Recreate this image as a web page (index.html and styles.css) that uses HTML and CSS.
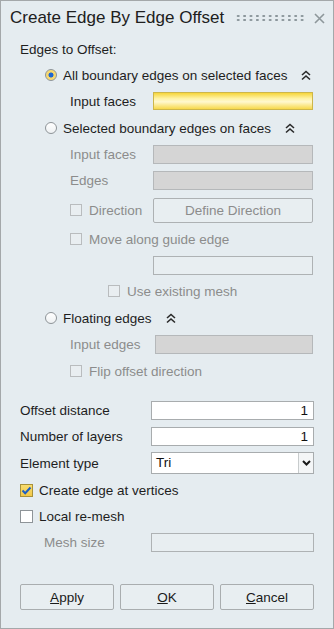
FILE: index.html
```html
<!DOCTYPE html>
<html lang="en">
<head>
    <meta charset="UTF-8">
    <meta name="viewport" content="width=device-width, initial-scale=1.0">
    <title>Create Edge By Edge Offset</title>
    <link rel="stylesheet" href="styles.css">
</head>
<body>
    <div class="dialog">
        <div class="titlebar">
            <span class="title">Create Edge By Edge Offset</span>
            <span class="grip"></span>
            <svg class="close" width="11" height="11" viewBox="0 0 11 11">
                <path d="M1 1L10 10M10 1L1 10" stroke="#8e979b" stroke-width="1.6" fill="none"/>
            </svg>
        </div>

        <div class="content">
            <div class="row group-label">Edges to Offset:</div>

            <div class="row opt">
                <span class="radio checked"></span>
                <span>All boundary edges on selected faces</span>
                <svg class="chev" width="10" height="11" viewBox="0 0 10 11">
                    <path d="M1 5L5 1.5L9 5M1 9.5L5 6L9 9.5" stroke="#2a2a2a" stroke-width="1.6" fill="none"/>
                </svg>
            </div>
            <div class="row sub">
                <span class="lbl">Input faces</span>
                <span class="field active"></span>
            </div>

            <div class="row opt">
                <span class="radio"></span>
                <span>Selected boundary edges on faces</span>
                <svg class="chev" width="10" height="11" viewBox="0 0 10 11">
                    <path d="M1 5L5 1.5L9 5M1 9.5L5 6L9 9.5" stroke="#2a2a2a" stroke-width="1.6" fill="none"/>
                </svg>
            </div>
            <div class="row sub off">
                <span class="lbl">Input faces</span>
                <span class="field grey"></span>
            </div>
            <div class="row sub off">
                <span class="lbl">Edges</span>
                <span class="field grey"></span>
            </div>
            <div class="row sub off dir-row">
                <span class="lbl"><span class="check dim"></span>Direction</span>
                <span class="btn dim-btn">Define Direction</span>
            </div>
            <div class="row sub off move-row">
                <span class="check dim"></span>Move along guide edge
            </div>
            <div class="row sub">
                <span class="lbl"></span>
                <span class="field empty"></span>
            </div>
            <div class="row off use-row">
                <span class="check dim"></span>Use existing mesh
            </div>

            <div class="row opt">
                <span class="radio"></span>
                <span>Floating edges</span>
                <svg class="chev" width="10" height="11" viewBox="0 0 10 11">
                    <path d="M1 5L5 1.5L9 5M1 9.5L5 6L9 9.5" stroke="#2a2a2a" stroke-width="1.6" fill="none"/>
                </svg>
            </div>
            <div class="row sub off">
                <span class="lbl wide">Input edges</span>
                <span class="field grey narrow"></span>
            </div>
            <div class="row sub off flip-row">
                <span class="check dim"></span>Flip offset direction
            </div>

            <div class="lower">
                <div class="row">
                    <span class="lbl2">Offset distance</span>
                    <span class="field num">1</span>
                </div>
                <div class="row">
                    <span class="lbl2">Number of layers</span>
                    <span class="field num">1</span>
                </div>
                <div class="row tall">
                    <span class="lbl2">Element type</span>
                    <span class="select">
                        <span class="select-text">Tri</span>
                        <span class="select-arrow">
                            <svg width="9" height="6" viewBox="0 0 9 6">
                                <path d="M1 1L4.5 4.5L8 1" stroke="#1a1a1a" stroke-width="2" fill="none"/>
                            </svg>
                        </span>
                    </span>
                </div>
                <div class="row">
                    <span class="check on">
                        <svg width="11" height="9" viewBox="0 0 11 9">
                            <path d="M1.5 4.5L4.2 7.2L9.5 1.5" stroke="#1d5fc4" stroke-width="2" fill="none"/>
                        </svg>
                    </span>Create edge at vertices
                </div>
                <div class="row">
                    <span class="check"></span>Local re-mesh
                </div>
                <div class="row off mesh-row">
                    <span class="lbl3">Mesh size</span>
                    <span class="field empty"></span>
                </div>
            </div>
        </div>

        <div class="buttons">
            <span class="btn"><u>A</u>pply</span>
            <span class="btn"><u>O</u>K</span>
            <span class="btn"><u>C</u>ancel</span>
        </div>
    </div>
</body>
</html>
```

FILE: styles.css
```css
body {
    margin: 0;
    font-family: "Liberation Sans", Arial, sans-serif;
    font-size: 13.5px;
    color: #1e1e1e;
}

.dialog {
    width: 334px;
    height: 629px;
    box-sizing: border-box;
    border: 1px solid #a4a8aa;
    background-color: #e5ecf0;
}

.titlebar {
    display: flex;
    align-items: center;
    height: 34px;
    padding-left: 9px;
}

.title {
    font-size: 17px;
    color: #202020;
}

.grip {
    width: 70px;
    height: 8px;
    margin-left: 11px;
    background-image: radial-gradient(circle, #8a959a 1px, transparent 1.3px);
    background-size: 6.4px 4px;
}

.close {
    margin-left: 9px;
}

.content {
    padding: 3px 0 0 19px;
}

.row {
    display: flex;
    align-items: center;
    height: 26px;
}

.group-label {
    height: 23px;
}

.opt {
    margin-top: 1px;
    padding-left: 25px;
}

.sub {
    padding-left: 50px;
}

.off {
    color: #8c8c8c;
}

.lbl {
    display: flex;
    align-items: center;
    width: 83px;
}

.lbl.wide {
    width: 85px;
}

.radio {
    width: 12px;
    height: 12px;
    box-sizing: border-box;
    border: 1px solid #8e9498;
    border-radius: 50%;
    background: linear-gradient(#ffffff, #eef1f3);
    margin-right: 6px;
}

.radio.checked {
    background: radial-gradient(circle, #1f67d2 2.2px, #f4d46a 2.8px, #f7dc7a 5px);
}

.chev {
    margin-left: 14px;
}

.field {
    display: block;
    width: 160px;
    height: 19px;
    box-sizing: border-box;
    border: 1px solid #a8acae;
    background-color: #ffffff;
}

.field.active {
    height: 18px;
    border-color: #cdb64a;
    background: linear-gradient(#f6d53a, #fff3a6 35%, #fff8cf 55%, #f7d84a);
}

.field.grey {
    border-color: #b5b8ba;
    background-color: #d5d5d5;
}

.field.narrow {
    width: 158px;
}

.field.empty {
    border-color: #aeb2b4;
    background-color: #e8eef1;
}

.dir-row {
    height: 28px;
    margin-top: 3px;
}

.move-row {
    margin-top: 2px;
}

.use-row {
    padding-left: 88px;
}

.flip-row {
    margin-top: 1px;
}

.check {
    display: flex;
    align-items: center;
    justify-content: center;
    width: 13px;
    height: 13px;
    box-sizing: border-box;
    border: 1px solid #8e9498;
    background-color: #ffffff;
    margin-right: 6px;
}

.check.dim {
    width: 12px;
    height: 12px;
    border-color: #b9bcbe;
    background-color: #e9eef1;
    margin-right: 7px;
}

.check.on {
    border-color: #a8913a;
    background: linear-gradient(#f8dc6e, #f2c84a);
}

.btn {
    display: flex;
    align-items: center;
    justify-content: center;
    width: 160px;
    height: 25px;
    box-sizing: border-box;
    border: 1px solid #adb1b3;
    border-radius: 2px;
    background-color: #e8eef1;
}

.dim-btn {
    color: #8c8c8c;
}

.lower {
    margin-top: 13px;
}

.lbl2 {
    width: 131px;
}

.lower .field {
    width: 163px;
}

.field.num {
    padding-right: 5px;
    text-align: right;
    line-height: 17px;
    color: #111;
}

.row.tall {
    height: 28px;
}

.select {
    display: flex;
    width: 163px;
    height: 22px;
    box-sizing: border-box;
    border: 1px solid #a8acae;
    background-color: #ffffff;
}

.select-text {
    flex: 1;
    padding-left: 4px;
    line-height: 20px;
    color: #111;
}

.select-arrow {
    display: flex;
    align-items: center;
    justify-content: center;
    width: 14px;
    border-left: 1px solid #c8cccd;
    background-color: #f4f6f7;
}

.mesh-row {
    padding-left: 24px;
}

.lbl3 {
    width: 107px;
}

.buttons {
    display: flex;
    gap: 6px;
    margin-top: 29px;
    padding-left: 19px;
}

.buttons .btn {
    width: 94px;
    height: 26px;
    border-color: #a9adaf;
    color: #1a1a1a;
}
```
